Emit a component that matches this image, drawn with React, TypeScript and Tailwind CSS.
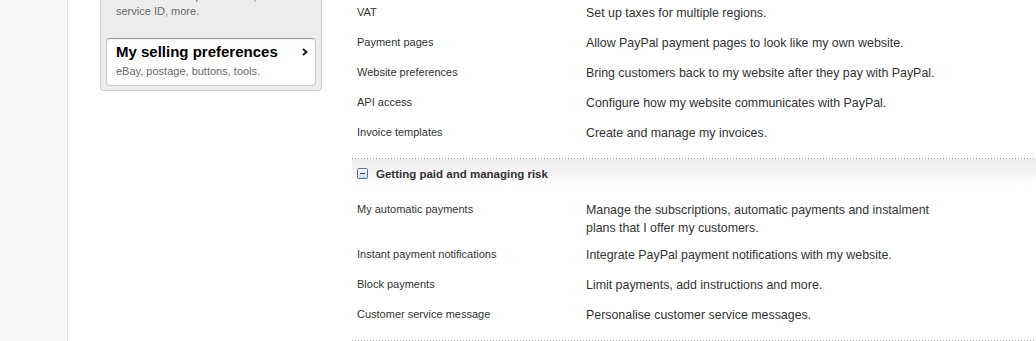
import React from "react";

const topRows: [string, string][] = [
  ["VAT", "Set up taxes for multiple regions."],
  ["Payment pages", "Allow PayPal payment pages to look like my own website."],
  ["Website preferences", "Bring customers back to my website after they pay with PayPal."],
  ["API access", "Configure how my website communicates with PayPal."],
  ["Invoice templates", "Create and manage my invoices."],
];

const riskRows: [string, string][] = [
  ["My automatic payments", "Manage the subscriptions, automatic payments and instalment plans that I offer my customers."],
  ["Instant payment notifications", "Integrate PayPal payment notifications with my website."],
  ["Block payments", "Limit payments, add instructions and more."],
  ["Customer service message", "Personalise customer service messages."],
];

function Row({ label, desc }: { label: string; desc: string }) {
  return (
    <div className="flex min-h-[30px] pl-[5px] pt-[4px] pb-[5px]">
      <div className="w-[229px] shrink-0 text-[11px] leading-[17px] text-[#333]">{label}</div>
      <div className="w-[352px] text-[12.4px] leading-[18px] text-[#333]">{desc}</div>
    </div>
  );
}

function Dotted() {
  return (
    <div className="h-px w-full bg-[linear-gradient(to_right,#9a9a9a_1px,transparent_1px)] bg-[length:3px_1px] bg-repeat-x" />
  );
}

export default function App() {
  return (
    <div className="w-[1036px] h-[341px] overflow-hidden flex bg-white font-['Liberation_Sans',Arial,sans-serif]">
      <div className="w-[68px] shrink-0 bg-[#f7f7f7] border-r border-[#e3e3e3]" />
      <div className="flex-1 flex pl-[32px]">
        <aside className="w-[222px] shrink-0 self-start -mt-[12px] bg-[#ededed] border border-[#cdcdcd] rounded-b-[4px] px-[5px] pb-[4px]">
          <div className="pl-[10px] text-[11px] leading-[15px] text-[#6a6a6a] mb-[19px]">
            Communication preferences, customer
            <br />
            service ID, more.
          </div>
          <div className="relative bg-white border border-[#c8c8c8] border-t-[#9c9c9c] rounded-[4px] pl-[9px] pr-[7px] pt-[4px] pb-[7px] shadow-[inset_0_1px_1px_rgba(0,0,0,0.08)]">
            <div className="flex items-center justify-between">
              <span className="text-[15px] leading-[18px] font-bold text-black">My selling preferences</span>
              <svg width="6" height="8" viewBox="0 0 6 8">
                <path d="M1 1 L4.5 4 L1 7" fill="none" stroke="#111" strokeWidth="1.8" />
              </svg>
            </div>
            <div className="mt-[3px] text-[11px] leading-[14px] text-[#6a6a6a]">eBay, postage, buttons, tools.</div>
          </div>
        </aside>
        <main className="ml-[30px] flex-1">
          <div className="pb-[8px]">
            {topRows.map(([l, d]) => (
              <Row key={l} label={l} desc={d} />
            ))}
          </div>
          <Dotted />
          <div className="h-[27px] bg-gradient-to-b from-[#ececec] to-white pl-[5px] pt-[8px] flex items-start mb-[11px]">
            <svg width="11" height="11" viewBox="0 0 11 11" className="mt-[1px] shrink-0">
              <defs>
                <linearGradient id="mg" x1="0" y1="0" x2="0" y2="1">
                  <stop offset="0" stopColor="#ffffff" />
                  <stop offset="1" stopColor="#c9d6ea" />
                </linearGradient>
              </defs>
              <rect x="0.5" y="0.5" width="10" height="10" rx="1" fill="url(#mg)" stroke="#5a6f94" />
              <rect x="3" y="5" width="5" height="1" fill="#2c3e5e" />
            </svg>
            <span className="ml-[8px] text-[11.5px] leading-[14px] font-bold text-[#333]">Getting paid and managing risk</span>
          </div>
          <div className="pb-[8px]">
            {riskRows.map(([l, d]) => (
              <Row key={l} label={l} desc={d} />
            ))}
          </div>
          <Dotted />
        </main>
      </div>
    </div>
  );
}
